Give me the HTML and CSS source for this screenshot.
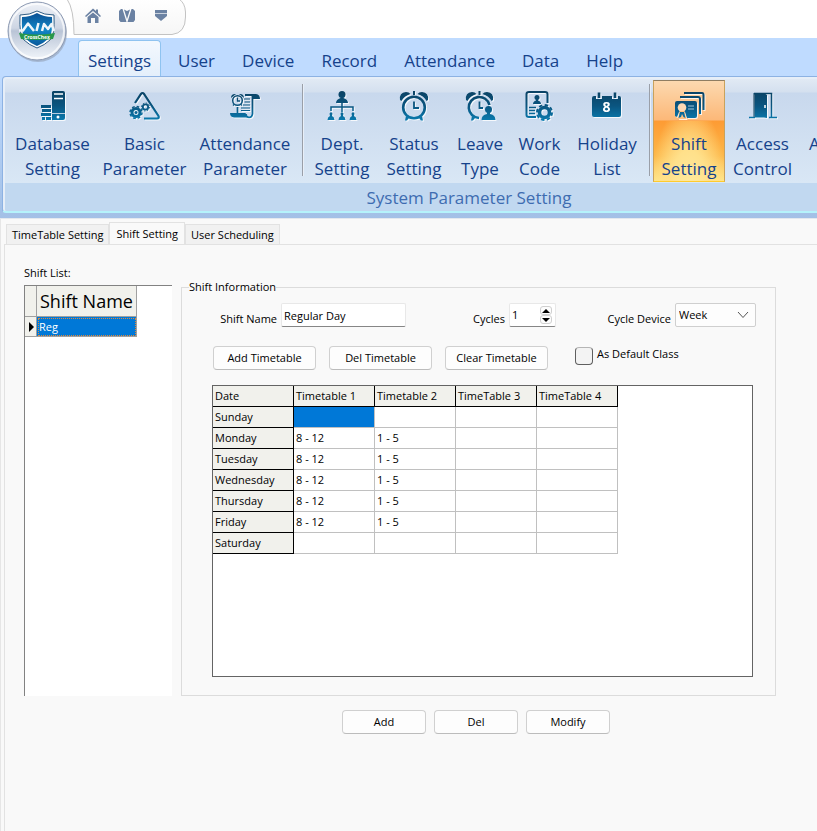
FILE: index.html
```
<!DOCTYPE html>
<html lang="en">
<head>
  <meta charset="UTF-8">
  <title>Shift Setting</title>
  <link rel="stylesheet" href="styles.css">
</head>
<body>
  <!-- shared gradients -->
  <svg class="defs" width="0" height="0" aria-hidden="true">
    <defs>
      <linearGradient id="ink" gradientUnits="userSpaceOnUse" x1="0" y1="0" x2="0" y2="32">
        <stop offset="0" stop-color="#0b4162"/>
        <stop offset="0.5" stop-color="#0a5580"/>
        <stop offset="1" stop-color="#0a7fb4"/>
      </linearGradient>
      <linearGradient id="orbFill" x1="0" y1="0" x2="0" y2="1">
        <stop offset="0" stop-color="#eef1f7"/>
        <stop offset="0.45" stop-color="#cdd5e3"/>
        <stop offset="0.5" stop-color="#b9c4d6"/>
        <stop offset="1" stop-color="#f2f6fb"/>
      </linearGradient>
      <linearGradient id="shieldFill" x1="0" y1="0" x2="0" y2="1">
        <stop offset="0" stop-color="#0a4f94"/>
        <stop offset="0.5" stop-color="#1187c6"/>
        <stop offset="1" stop-color="#0a5a9c"/>
      </linearGradient>
      <linearGradient id="qat" x1="0" y1="0" x2="0" y2="1">
        <stop offset="0" stop-color="#ffffff"/>
        <stop offset="1" stop-color="#f6f6f6"/>
      </linearGradient>
    </defs>
  </svg>

  <header class="titlebar">
    <button class="orb" type="button" aria-label="Application menu">
      <svg width="64" height="64" viewBox="0 0 64 64">
        <circle cx="33" cy="33" r="29" fill="#8a93a5" opacity="0.5"/>
        <circle cx="32" cy="31" r="29" fill="url(#orbFill)" stroke="#8e9bb3"/>
        <circle cx="32" cy="31" r="27" fill="none" stroke="#ffffff" stroke-opacity="0.7" stroke-width="2"/>
        <path d="M32 11 Q39 15 49 15 Q50 36 45 40 Q40 45 32 48 Q24 45 19 40 Q14 36 15 15 Q25 15 32 11Z" fill="#fff" stroke="#335f86"/>
        <path d="M32 13 Q39 17 47 17 Q48 35 43 39 Q39 43 32 46 Q25 43 21 39 Q16 35 17 17 Q25 17 32 13Z" fill="url(#shieldFill)"/>
        <path d="M14 30.500 H18 L23 23.500 L29 31 M31.500 31 L33.500 23 M37 31 L39 24 L43 29 L46.500 24 L49 31" fill="none" stroke="#eef5fa" stroke-width="2.500" stroke-linejoin="round"/>
        <path d="M14 33 Q32 36 50 33 L48 39 Q32 41 16 39Z" fill="#27984a"/>
        <text x="32" y="39" class="orb-text">CrossChex</text>
      </svg>
    </button>
    <div class="quick">
      <svg class="quick-shape" width="122" height="36" viewBox="0 0 122 36">
        <path d="M2 -1 Q9 9 9 34.500 H107 Q120.500 33 120.500 17 V12 Q120 3 114 -1Z" fill="url(#qat)" stroke="#c3c3c3"/>
      </svg>
      <button type="button" aria-label="Home">
        <svg width="16" height="16" viewBox="0 0 16 16"><path d="M0 8 L8 0.500 L11 3 V1.500 H13 V5 L16 8 L15 9 L8 3 L1 9Z" fill="#6b82a3"/><path d="M2.500 9 L8 4.500 L13.500 9 V15 H10 V10 H6 V15 H2.500Z" fill="#6b82a3"/></svg>
      </button>
      <button type="button" aria-label="Shift layout">
        <svg width="16" height="16" viewBox="0 0 16 16"><path d="M0 3 L2 1 H3.500 L7.500 14 H1.500 L0 12Z M5 1.500 L8 3 L11 1.500 L8 11Z M12.500 1 H14 L16 3 V12 L14.500 14 H8.500Z" fill="#6b82a3"/></svg>
      </button>
      <button type="button" aria-label="Customize">
        <svg width="16" height="16" viewBox="0 0 16 16"><path d="M2 2 H14 V8 L8 13 L2 8Z" fill="#6b82a3"/><path d="M2 5.500 H14" stroke="#c9d2de" stroke-width="1"/></svg>
      </button>
    </div>
  </header>

  <nav class="menu">
    <a class="menu-tab active" href="#">Settings</a>
    <a class="menu-tab" href="#">User</a>
    <a class="menu-tab" href="#">Device</a>
    <a class="menu-tab" href="#">Record</a>
    <a class="menu-tab" href="#">Attendance</a>
    <a class="menu-tab" href="#">Data</a>
    <a class="menu-tab" href="#">Help</a>
  </nav>

  <div class="ribbon">
    <div class="group">
      <div class="tools">
        <button class="tool" type="button">
          <svg class="icon" viewBox="0 0 32 32">
            <path class="f" d="M16 1 H26 Q28 1 28 3 V28 Q28 30 26 30 H15 V2Z"/>
            <path class="f" d="M4 15 H14 V18 H4Z M5 19 H14 V22 H5Z M4 23 H14 V26 H4Z M5 27 H8 V30 H5Z M9 27 H14 V30 H9Z"/>
            <path d="M17 4 H26 M17 8.500 H26" stroke="#fff" stroke-width="1.500"/>
            <path d="M15 23.500 H28" stroke="#b7cde0"/>
            <circle cx="21" cy="27" r="1.500" fill="#fff"/>
          </svg>
          <span>Database<br>Setting</span>
        </button>
        <button class="tool" type="button">
          <svg class="icon" viewBox="0 0 32 32">
            <path class="l" stroke-width="2.200" d="M6 13 L12 4 Q13.500 2 15 4 L29.500 26 Q30.500 28.500 28 28.500 H15"/>
            <circle class="l" cx="7" cy="22.500" r="4" stroke-width="3"/>
            <circle class="l" cx="7" cy="22.500" r="6" stroke-width="1.500" stroke-dasharray="2.700 2"/>
            <circle class="f" cx="7" cy="22.500" r="1.500"/>
            <circle class="l" cx="16.500" cy="17" r="2.700" stroke-width="1.800"/>
            <circle class="l" cx="16.500" cy="17" r="4" stroke-width="1" stroke-dasharray="1.600 1.500"/>
          </svg>
          <span>Basic<br>Parameter</span>
        </button>
        <button class="tool" type="button">
          <svg class="icon" viewBox="0 0 32 32">
            <circle class="l" cx="8.500" cy="10.500" r="4.800" stroke-width="1.500"/>
            <path class="l" stroke-width="1.300" d="M8.500 7.500 V11 H11 M4 15.500 L5 14.500 M13 15.500 L12 14.500"/>
            <path class="f" d="M2 8 Q2 3.500 7 4Z M15 8 Q15 3.500 10 4Z M16 4 H27 Q31 4.500 31 9 H24 Q24 6 22 6 H16Z"/>
            <path class="l" stroke-width="1.700" d="M23.500 6 V24 Q23 27.500 20 27.500 Q17 27 17 24 M8.500 17 V23"/>
            <path class="f" d="M1 23 H16.500 Q17 26 20 27.500 H5 Q1 27 1 23Z"/>
            <path class="l" stroke-width="1.200" d="M15 9 H21 M15.500 12 H21 M14 15 H21 M12 18 H21 M12 20.500 H21"/>
          </svg>
          <span>Attendance<br>Parameter</span>
        </button>
        <i class="divider"></i>
        <button class="tool" type="button">
          <svg class="icon" viewBox="0 0 32 32">
            <circle class="f" cx="16" cy="4.500" r="3.500"/>
            <path class="f" d="M10 13 Q10 9.500 14.500 8 V6 H17.500 V8 Q22 9.500 22 13Z"/>
            <path class="l" stroke-width="1.500" d="M16 13 V22 M5 21 V17 H27 V21"/>
            <path class="f" d="M5 22 L6.500 23.500 L6 26 Q8.500 27 8.500 30 H1.500 Q1.500 27 4 26 L3.500 23.500Z M16 22 L17.500 23.500 L17 26 Q19.500 27 19.500 30 H12.500 Q12.500 27 15 26 L14.500 23.500Z M27 22 L28.500 23.500 L28 26 Q30.500 27 30.500 30 H23.500 Q23.500 27 26 26 L25.500 23.500Z"/>
          </svg>
          <span>Dept.<br>Setting</span>
        </button>
        <button class="tool" type="button">
          <svg class="icon" viewBox="0 0 32 32">
            <circle class="l" cx="16" cy="17.500" r="10.800" stroke-width="2.600"/>
            <path class="f" d="M2 10 Q1 2.500 8 2 Q11 2 12.500 4 Q6 6 3.500 11Z M30 10 Q31 2.500 24 2 Q21 2 19.500 4 Q26 6 28.500 11Z M15 1 H17 V5 H15Z M8 26 L11 28 L9 30.500 H7Z M24 26 L21 28 L23 30.500 H25Z"/>
            <path class="l" stroke-width="1.800" d="M16 11.500 V18 H21"/>
          </svg>
          <span>Status<br>Setting</span>
        </button>
        <button class="tool" type="button">
          <svg class="icon" viewBox="0 0 32 32">
            <path class="l" stroke-width="2.600" d="M15 28 A10.500 10.500 0 1 1 25.500 15"/>
            <path class="f" d="M2 10 Q1 2.500 8 2 Q11 2 12.500 4 Q6 6 3.500 11Z M29 10 Q30 2.500 23 2 Q20 2 18.500 4 Q25 6 27.500 11Z M14.500 1 H16.500 V5 H14.500Z M8 26 L11 28 L9 30.500 H7Z"/>
            <path class="l" stroke-width="1.800" d="M15.500 11.500 V18 H19"/>
            <circle class="f" cx="24.500" cy="19.500" r="3.500"/>
            <path class="f" d="M17.500 30 Q17.500 25 23 24 V21 H26 V24 Q31.500 25 31.500 30Z"/>
          </svg>
          <span>Leave<br>Type</span>
        </button>
        <button class="tool" type="button">
          <svg class="icon" viewBox="0 0 32 32">
            <path class="l" stroke-width="2" d="M12 27 H5 Q2.500 27 2.500 25 V4 Q2.500 2 5 2 H21 Q23.500 2 23.500 4 V13"/>
            <circle class="f" cx="13" cy="7.500" r="2.500"/>
            <path class="f" d="M9 14 Q9 11.500 12 10.500 V9 H14 V10.500 Q17 11.500 17 14Z"/>
            <path class="l" stroke-width="1.300" d="M5 17.500 H12 M5 20.500 H11 M5 23.500 H11"/>
            <circle class="l" cx="20.500" cy="22.500" r="5" stroke-width="3.600"/>
            <circle class="l" cx="20.500" cy="22.500" r="7.500" stroke-width="2" stroke-dasharray="3.400 2.490"/>
          </svg>
          <span>Work<br>Code</span>
        </button>
        <button class="tool" type="button">
          <svg class="icon" viewBox="0 0 32 32">
            <path class="f" d="M3 6 H5 V9 H11 V6 H21 V9 H27 V6 H28 Q30 6 30 8 V25 Q30 27 28 27 H3 Q1 27 1 25 V8 Q1 6 3 6Z"/>
            <path class="l" stroke-width="2.600" d="M8 2.500 V8 M24 2.500 V8"/>
            <text class="day" x="15.500" y="22">8</text>
          </svg>
          <span>Holiday<br>List</span>
        </button>
        <i class="divider"></i>
        <button class="tool selected" type="button">
          <svg class="icon" viewBox="0 0 32 32">
            <path class="l" stroke-width="2" d="M11 3 H29 Q30.500 3 30.500 5 V20 M7 7 H25 Q27 7 27 9 V24"/>
            <path class="f" d="M4 11 H22 Q24 11 24 13 V26 Q24 28 22 28 H14 L12 22 H6 L4 27 L2 26 V13 Q2 11 4 11Z"/>
            <circle cx="9" cy="17.500" r="4.300" fill="#fdd9b4"/>
            <path d="M15 16 H21 M15 19 H21" stroke="#a6c4d6" stroke-width="1.200"/>
            <path d="M6.500 21 L5 29 H13.500 L11.500 21Z" fill="#fdc183"/>
            <path class="f" d="M7 22 L5.500 28 L8 27 L9 24 L10.500 27 L12.500 28 L11 22Z"/>
          </svg>
          <span>Shift<br>Setting</span>
        </button>
        <button class="tool" type="button">
          <svg class="icon" viewBox="0 0 32 32">
            <path class="l" stroke-width="1.500" d="M2 27.500 H8 M22 27.500 H30 M7 3.500 H24.500 V27.500"/>
            <path class="f" d="M6.500 3 H17 L20 5 V28 L17 27.500 H6.500Z"/>
            <path d="M7 4.500 V27" stroke="#6d7f8d"/>
            <path d="M18 15 V18" stroke="#fff" stroke-width="1.500"/>
          </svg>
          <span>Access<br>Control</span>
        </button>
        <button class="tool clipped" type="button">
          <span>A</span>
        </button>
      </div>
      <div class="group-title">System Parameter Setting</div>
    </div>
  </div>

  <main class="workspace">
    <div class="tabs" role="tablist">
      <button class="tab" type="button" role="tab">TimeTable Setting</button>
      <button class="tab current" type="button" role="tab" aria-selected="true">Shift Setting</button>
      <button class="tab" type="button" role="tab">User Scheduling</button>
    </div>

    <div class="page">
      <div class="columns">
        <section class="shifts">
          <div class="caption">Shift List:</div>
          <div class="list">
            <table class="list-table">
              <tr><th class="mark"></th><th class="name">Shift Name</th></tr>
              <tr><td class="mark"><i class="arrow"></i></td><td class="name picked">Reg</td></tr>
            </table>
          </div>
        </section>

        <fieldset class="info">
          <legend>Shift Information</legend>
          <div class="fields">
            <div class="field">
              <label for="shiftName">Shift Name</label>
              <input class="box name-box" id="shiftName" type="text" value="Regular Day">
            </div>
            <div class="field">
              <label for="cycles">Cycles</label>
              <div class="box spinner">
                <input id="cycles" type="number" value="1">
                <div class="steps">
                  <button type="button" aria-label="Up"><i class="up"></i></button>
                  <button type="button" aria-label="Down"><i class="down"></i></button>
                </div>
              </div>
            </div>
            <div class="field">
              <label for="device">Cycle Device</label>
              <div class="combo">
                <select id="device">
                  <option>Week</option>
                </select>
                <svg width="12" height="8" viewBox="0 0 12 8"><path d="M1 1 L6 6.500 L11 1" fill="none" stroke="#555"/></svg>
              </div>
            </div>
          </div>

          <div class="actions">
            <button class="btn" type="button">Add Timetable</button>
            <button class="btn" type="button">Del Timetable</button>
            <button class="btn" type="button">Clear Timetable</button>
            <label class="check"><input type="checkbox">As Default Class</label>
          </div>

          <div class="grid-box">
            <table class="schedule">
              <tr><th>Date</th><th>Timetable 1</th><th>Timetable 2</th><th>TimeTable 3</th><th>TimeTable 4</th></tr>
              <tr><th>Sunday</th><td class="picked"></td><td></td><td></td><td></td></tr>
              <tr><th>Monday</th><td>8 - 12</td><td>1 - 5</td><td></td><td></td></tr>
              <tr><th>Tuesday</th><td>8 - 12</td><td>1 - 5</td><td></td><td></td></tr>
              <tr><th>Wednesday</th><td>8 - 12</td><td>1 - 5</td><td></td><td></td></tr>
              <tr><th>Thursday</th><td>8 - 12</td><td>1 - 5</td><td></td><td></td></tr>
              <tr><th>Friday</th><td>8 - 12</td><td>1 - 5</td><td></td><td></td></tr>
              <tr><th>Saturday</th><td></td><td></td><td></td><td></td></tr>
            </table>
          </div>
        </fieldset>
      </div>

      <div class="footer">
        <button class="btn" type="button">Add</button>
        <button class="btn" type="button">Del</button>
        <button class="btn" type="button">Modify</button>
      </div>
    </div>
  </main>
</body>
</html>
```
FILE: styles.css
```
* {
  box-sizing: border-box;
}

body {
  margin: 0;
  min-height: 100vh;
  display: flex;
  flex-direction: column;
  overflow-x: hidden;
  background: #f9f9f9;
  color: #000;
  font: 11px/16px "Open Sans", "Noto Sans", sans-serif;
}

button,
input,
select {
  font: inherit;
  color: inherit;
  margin: 0;
}

.defs {
  position: absolute;
}

/* title bar */
.titlebar {
  position: relative;
  height: 38px;
  background: #fff;
}

.orb {
  position: absolute;
  left: 5px;
  top: 0;
  z-index: 2;
  padding: 0;
  border: 0;
  background: none;
  line-height: 0;
}

.orb-text {
  font: bold 5px "Open Sans", sans-serif;
  fill: #fff;
  text-anchor: middle;
}

.quick {
  position: relative;
  display: flex;
  gap: 18px;
  margin-left: 65px;
  padding: 8px 0 0 20px;
  width: 122px;
}

.quick-shape {
  position: absolute;
  left: 0;
  top: 0;
}

.quick button {
  position: relative;
  padding: 0;
  border: 0;
  background: none;
  line-height: 0;
}

/* menu tabs */
.menu {
  display: flex;
  gap: 7px;
  height: 38px;
  padding: 2px 0 0 78px;
  background: #bfdbff;
}

.menu-tab {
  padding: 0 9px;
  border: 1px solid transparent;
  color: #15428b;
  font-size: 17px;
  line-height: 40px;
  text-decoration: none;
}

.menu-tab.active {
  border-color: #8fc3f0;
  border-bottom: 0;
  border-radius: 4px 4px 0 0;
  background: linear-gradient(#f3f8fe, #e4effb);
}

/* ribbon */
.ribbon {
  height: 143px;
  padding: 0 0 0 2px;
  overflow: hidden;
  background: linear-gradient(#bfdbff, #a3c0e6);
  border-bottom: 1px solid #e3e8ee;
}

.group {
  width: max-content;
  border: 1px solid #8db2e3;
  border-bottom: 2px solid #b5f3fb;
  border-radius: 4px;
  box-shadow: inset 1px 1px 0 1px #e6eef8;
  background: linear-gradient(#e3ebf5 0, #d4e0ef 15px, #c8d8ed 16px, #d9e7f5 106px, #c1d8f0 106px);
}

.tools {
  display: grid;
  grid-template-columns: 89px 95px 106px 8px 72px 72px 60px 59px 76px 8px 72px 75px 135px;
  padding: 3px 0 1px 5px;
}

.tool {
  display: flex;
  flex-direction: column;
  align-items: center;
  gap: 9px;
  height: 102px;
  padding: 9px 0 0;
  border: 1px solid transparent;
  background: none;
  color: #15428b;
  font-size: 17px;
  line-height: 25px;
}

.tool.clipped {
  align-items: flex-start;
  padding: 50px 0 0 8px;
}

.tool.selected {
  border-color: #8f7d62 #c9a25c #ffcb2e;
  background:
    radial-gradient(ellipse at 50% 100%, #fff3b0 0, #ffe08a 50%, rgba(255, 200, 90, 0) 85%) 0 40px no-repeat,
    linear-gradient(#fcd9b0 0, #fcb878 39px, #fd9b34 40px, #fdb748 75px, #ffe789 100%);
}

.icon {
  flex: none;
  width: 32px;
  height: 32px;
  filter: drop-shadow(1px 1px 0 rgba(255, 255, 255, 0.8));
}

.icon .f {
  fill: url(#ink);
}

.icon .l {
  fill: none;
  stroke: url(#ink);
}

.day {
  font: bold 14px "Open Sans", sans-serif;
  fill: #fff;
  text-anchor: middle;
}

.divider {
  width: 2px;
  height: 92px;
  margin: 4px 0 0 4px;
  border-left: 1px solid #9a9fa8;
  border-right: 1px solid #e8eff8;
}

.group-title {
  height: 28px;
  color: #3e6cb0;
  font-size: 17px;
  line-height: 29px;
  text-align: center;
}

/* work area */
.workspace {
  flex: 1;
  display: flex;
  flex-direction: column;
  padding: 3px 0 0 4px;
  border-left: 1px solid #e6e6e6;
}

.tabs {
  display: flex;
  align-items: flex-end;
  padding-left: 1px;
  margin-bottom: -1px;
}

.tab {
  height: 21px;
  padding: 0 5px;
  border: 1px solid #e2e2e2;
  background: #f1f1f1;
  line-height: 18px;
}

.tab.current {
  height: 23px;
  padding: 0 6px;
  border-bottom: 0;
  background: #f9f9f9;
}

.page {
  flex: 1;
  margin-left: -1px;
  padding: 18px 41px 20px 19px;
  border-top: 1px solid #e2e2e2;
  border-left: 1px solid #e2e2e2;
}

.columns {
  display: flex;
  gap: 9px;
}

.shifts {
  display: flex;
  flex-direction: column;
  width: 148px;
}

.caption {
  height: 22px;
  line-height: 20px;
}

.list {
  flex: 1;
  border-top: 1px solid #828282;
  border-left: 1px solid #828282;
  background: #fff;
}

.list-table {
  border-spacing: 0;
}

.list-table th,
.list-table td {
  padding: 0 3px;
  border: 1px solid #a0a0a0;
  border-width: 0 1px 1px 0;
  text-align: left;
}

.list-table th {
  height: 31px;
  background: #f1f1ec;
  font-size: 18px;
  font-weight: normal;
}

.list-table td {
  height: 20px;
  padding: 0 2px;
}

.list-table .mark {
  width: 12px;
  padding: 0;
  background: #f1f1ec;
}

.list-table .name {
  width: 100px;
}

.list-table .picked {
  outline: 1px dotted #e0893b;
  outline-offset: -2px;
}

.picked {
  background: #0078d7;
  color: #fff;
}

.arrow {
  display: block;
  margin-left: 4px;
  width: 0;
  border: 5px solid transparent;
  border-left-color: #000;
  border-right: 0;
}

.info {
  flex: 1;
  min-width: 0;
  margin: 16px 0 0;
  padding: 8px 22px 18px 30px;
  border: 1px solid #dcdcdc;
}

.info legend {
  margin-left: -23px;
  padding: 0;
}

.fields {
  display: grid;
  grid-template-columns: 194px 150px 200px;
}

.field {
  display: flex;
  align-items: flex-end;
  justify-content: flex-end;
  gap: 4px;
}

.box {
  height: 24px;
  border: 1px solid #e8e8e8;
  border-bottom-color: #868686;
  border-radius: 2px;
  background: #fff;
}

.name-box {
  width: 125px;
  padding: 0 2px;
}

.spinner {
  display: flex;
  width: 47px;
}

.spinner input {
  width: 28px;
  height: 20px;
  padding: 0 2px;
  border: 0;
  background: none;
  appearance: textfield;
}

.spinner input::-webkit-inner-spin-button {
  appearance: none;
}

.steps {
  display: flex;
  flex-direction: column;
  padding: 2px 0 0 2px;
}

.steps button {
  display: flex;
  align-items: center;
  justify-content: center;
  width: 12px;
  height: 9px;
  padding: 0;
  border: 1px solid #d0d0d0;
  border-radius: 3px;
  background: #fdfdfd;
}

.up,
.down {
  border: 4px solid transparent;
}

.up {
  border-top: 0;
  border-bottom-color: #000;
}

.down {
  border-bottom: 0;
  border-top-color: #000;
}

.combo {
  display: grid;
  align-items: center;
}

.combo select,
.combo svg {
  grid-area: 1 / 1;
}

.combo select {
  appearance: none;
  width: 81px;
  height: 24px;
  padding: 0 3px;
  border: 1px solid #cfcfcf;
  border-radius: 2px;
  background: #fdfdfd;
}

.combo svg {
  justify-self: end;
  margin-right: 7px;
  pointer-events: none;
}

.actions {
  display: flex;
  gap: 13px;
  margin: 19px 0 15px 1px;
}

.btn {
  height: 24px;
  min-width: 84px;
  padding: 0 12px;
  border: 1px solid #d0d0d0;
  border-bottom-color: #bcbcbc;
  border-radius: 4px;
  background: #fdfdfd;
  line-height: 20px;
}

.actions .btn {
  width: 103px;
  padding: 0;
}

.check {
  display: flex;
  gap: 4px;
  height: 20px;
  margin-left: 14px;
}

.check input {
  appearance: none;
  width: 18px;
  height: 18px;
  margin-top: 1px;
  border: 1px solid #5f5f5f;
  border-top-color: #b5b5b5;
  border-radius: 4px;
  background: #f3f3f3;
}

.grid-box {
  height: 292px;
  border: 1px solid #646464;
  background: #fff;
}

.schedule {
  width: 405px;
  table-layout: fixed;
  border-spacing: 0;
}

.schedule th,
.schedule td {
  height: 21px;
  padding: 0 2px;
  border: 1px solid #c0c0c0;
  border-width: 0 1px 1px 0;
  font-weight: normal;
  text-align: left;
}

.schedule th {
  border-color: #000;
  background: #f1f1ec;
}

.footer {
  display: flex;
  gap: 8px;
  margin: 14px 0 0 318px;
}
```
